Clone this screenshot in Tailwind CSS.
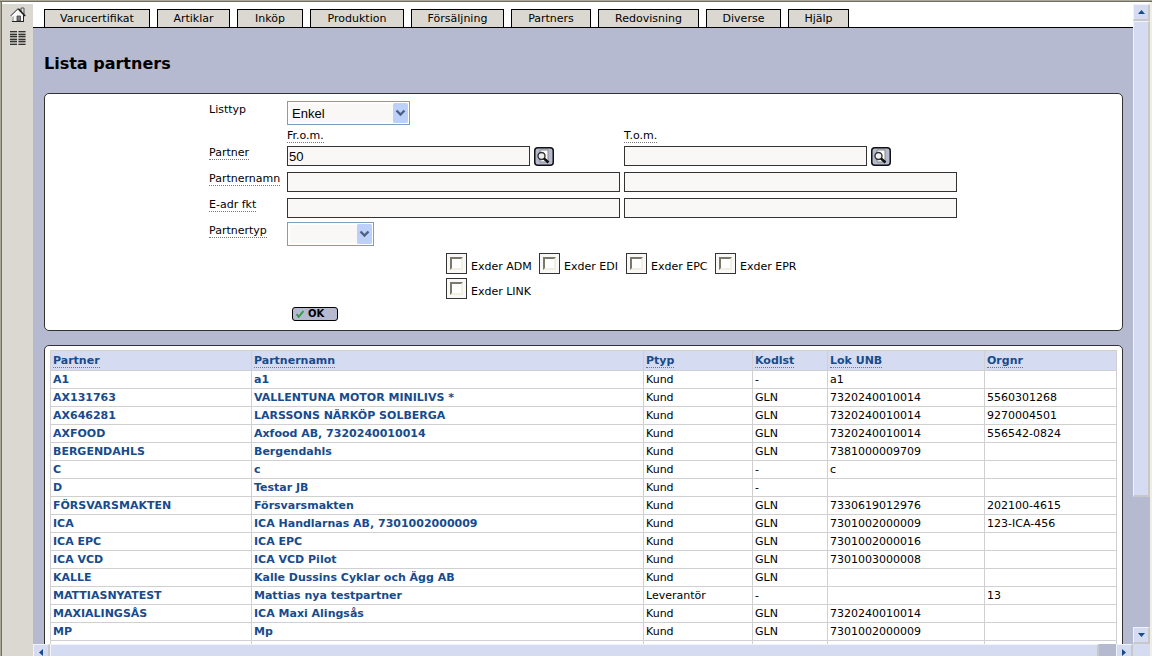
<!DOCTYPE html>
<html lang="sv">
<head>
<meta charset="utf-8">
<title>Lista partners</title>
<script src="https://cdn.jsdelivr.net/npm/@tailwindcss/browser@4"></script>
</head>
<body class="h-screen overflow-hidden flex flex-col bg-white text-black text-[11px] leading-[13px] font-['Verdana','DejaVu_Sans',sans-serif]">
<div class="h-[2px] shrink-0 bg-[#aca899] border-b border-[#716f64]"></div>
<div class="flex-1 min-h-0 flex border-l border-[#aca899]">
  <aside class="w-8 shrink-0 border-l border-[#716f64] pt-[2px] flex">
    <div class="flex-1 bg-[#dbd8d1] flex flex-col items-center pt-[3px] gap-[8px]">
      <a href="#" aria-label="Hem"><svg width="16" height="16" viewBox="0 0 16 16" class="block">
        <path d="M11 1h3v6h-3z" fill="#ddd" stroke="#555" stroke-width="1"/>
        <path d="M2.500 8v6h11V8L8 2.500z" fill="#f6f6f6"/>
        <path d="M3 8.500V14" stroke="#888"/>
        <path d="M0.700 9L8 1.800L10.500 4" fill="none" stroke="#666" stroke-width="1.200"/>
        <path d="M2 9.500L8.500 3.500" stroke="#fff" stroke-width="1.600"/>
        <path d="M8.500 2L15.200 9" stroke="#222" stroke-width="1.800"/>
        <path d="M7 14V9h3.500v5z" fill="#777" stroke="#444" stroke-width=".8"/>
        <path d="M2 14.500h12M13.500 8v6.500" fill="none" stroke="#222"/>
      </svg></a>
      <a href="#" aria-label="Meny"><svg width="16" height="14" viewBox="0 0 16 14" class="block">
        <path d="M0 0h7v14H0zM8.500 0H15.500v14H8.500z" fill="#a3a19c"/>
        <path d="M0 .5h7M8.500 .5h7M0 3.500h7M8.500 3.500h7M0 5.500h7M8.500 5.500h7M0 8.500h7M8.500 8.500h7M0 10.500h7M8.500 10.500h7M0 13.500h7M8.500 13.500h7" stroke="#333"/>
      </svg></a>
    </div>
  </aside>

  <div class="flex-1 min-w-0 flex flex-col">
    <div class="flex-1 min-h-0 flex">
      <main class="flex-1 min-w-0 overflow-hidden bg-[#b5bad0]">
        <nav class="flex gap-[7px] bg-white border-b border-black pt-[7px] pl-[11px] leading-[17px]">
          <a href="#" class="w-[106px] border border-b-0 border-black bg-[#dbd8d1] text-center">Varucertifikat</a>
          <a href="#" class="w-[73px] border border-b-0 border-black bg-[#dbd8d1] text-center">Artiklar</a>
          <a href="#" class="w-[66px] border border-b-0 border-black bg-[#dbd8d1] text-center">Inköp</a>
          <a href="#" class="w-[94px] border border-b-0 border-black bg-[#dbd8d1] text-center">Produktion</a>
          <a href="#" class="w-[93px] border border-b-0 border-black bg-[#dbd8d1] text-center">Försäljning</a>
          <a href="#" class="w-[80px] border border-b-0 border-black bg-[#dbd8d1] text-center">Partners</a>
          <a href="#" class="w-[101px] border border-b-0 border-black bg-[#dbd8d1] text-center">Redovisning</a>
          <a href="#" class="w-[75px] border border-b-0 border-black bg-[#dbd8d1] text-center">Diverse</a>
          <a href="#" class="w-[61px] border border-b-0 border-black bg-[#dbd8d1] text-center">Hjälp</a>
        </nav>
        <div class="pl-[11px] pr-[10px]">
          <h1 class="pt-[26px] pb-[19px] text-base leading-5 font-bold">Lista partners</h1>

          <form class="bg-white border border-[#333] rounded-[5px] pl-[164px] pt-[6px] pb-[9px]" onsubmit="return false">
            <div class="grid grid-cols-[74px_333px_333px] gap-x-1 auto-rows-[26px] items-center">
              <label for="listtyp" class="self-start mt-[3px]">Listtyp</label>
              <div class="relative w-[123px] col-span-2">
                <select id="listtyp" class="appearance-none block w-full h-6 border border-[#7f9db9] bg-[#f9f8f6] pl-1 text-[13px] font-['Liberation_Sans',sans-serif] shadow-[inset_0_0_0_2px_#fff]"><option>Enkel</option></select>
                <svg class="absolute right-[2px] top-[2px] pointer-events-none" width="15" height="20" viewBox="0 0 15 20"><rect width="15" height="20" rx="1.500" fill="#bdd0fa"/><path d="M3.500 7.500l4 4 4-4" fill="none" stroke="#4d6185" stroke-width="2.400"/></svg>
              </div>
            </div>
            <div class="grid grid-cols-[333px_333px] gap-x-1 pl-[78px] pt-[3px]">
              <div><span class="inline-block border-b border-dotted border-[#777]">Fr.o.m.</span></div>
              <div><span class="inline-block border-b border-dotted border-[#777]">T.o.m.</span></div>
            </div>
            <div class="grid grid-cols-[74px_333px_333px] gap-x-1 auto-rows-[26px] items-center">
              <label for="p1" class="self-start justify-self-start mt-[3px] border-b border-dotted border-[#777]">Partner</label>
              <div class="flex gap-1">
                <input id="p1" value="50" class="w-[243px] h-5 border border-[#333] bg-[#f9f8f6] px-px text-[13px] font-['Liberation_Sans',sans-serif]">
                <button type="button" aria-label="Sök från"><svg width="20" height="19" viewBox="0 0 20 19" class="block"><rect x=".75" y=".75" width="18.500" height="17.500" rx="3" fill="#b5bad0" stroke="#111" stroke-width="1.500"/><path d="M6 3h8v12H6z" fill="#fff" stroke="#888"/><circle cx="7.500" cy="9" r="3.500" fill="#eee" stroke="#333" stroke-width="1.400"/><path d="M10 11.500l4.500 4" stroke="#111" stroke-width="2.400"/></svg></button>
              </div>
              <div class="flex gap-1">
                <input aria-label="Partner t.o.m." class="w-[243px] h-5 border border-[#333] bg-[#f9f8f6] px-px text-[13px] font-['Liberation_Sans',sans-serif]">
                <button type="button" aria-label="Sök till"><svg width="20" height="19" viewBox="0 0 20 19" class="block"><rect x=".75" y=".75" width="18.500" height="17.500" rx="3" fill="#b5bad0" stroke="#111" stroke-width="1.500"/><path d="M6 3h8v12H6z" fill="#fff" stroke="#888"/><circle cx="7.500" cy="9" r="3.500" fill="#eee" stroke="#333" stroke-width="1.400"/><path d="M10 11.500l4.500 4" stroke="#111" stroke-width="2.400"/></svg></button>
              </div>
              <label for="n1" class="self-start justify-self-start mt-[3px] border-b border-dotted border-[#777]">Partnernamn</label>
              <input id="n1" class="w-full h-5 border border-[#333] bg-[#f9f8f6] px-px text-[13px] font-['Liberation_Sans',sans-serif]">
              <input aria-label="Partnernamn t.o.m." class="w-full h-5 border border-[#333] bg-[#f9f8f6] px-px text-[13px] font-['Liberation_Sans',sans-serif]">
              <label for="e1" class="self-start justify-self-start mt-[3px] border-b border-dotted border-[#777]">E-adr fkt</label>
              <input id="e1" class="w-full h-5 border border-[#333] bg-[#f9f8f6] px-px text-[13px] font-['Liberation_Sans',sans-serif]">
              <input aria-label="E-adr fkt t.o.m." class="w-full h-5 border border-[#333] bg-[#f9f8f6] px-px text-[13px] font-['Liberation_Sans',sans-serif]">
              <label for="ptyp" class="self-start justify-self-start mt-[3px] border-b border-dotted border-[#777]">Partnertyp</label>
              <div class="relative w-[87px]">
                <select id="ptyp" class="appearance-none block w-full h-6 border border-[#7f9db9] bg-[#f9f8f6] pl-1 text-[13px] font-['Liberation_Sans',sans-serif] shadow-[inset_0_0_0_2px_#fff]"><option></option></select>
                <svg class="absolute right-[2px] top-[2px] pointer-events-none" width="15" height="20" viewBox="0 0 15 20"><rect width="15" height="20" rx="1.500" fill="#bdd0fa"/><path d="M3.500 7.500l4 4 4-4" fill="none" stroke="#4d6185" stroke-width="2.400"/></svg>
              </div>
            </div>
            <div class="pl-[237px] pt-[6px] grid grid-cols-[93px_87px_89px_auto] gap-y-1">
                <label class="flex items-end gap-1"><input type="checkbox" class="appearance-none size-[21px] p-[3px] border border-[#333] bg-[#f9f8f6] before:block before:size-[13px] before:bg-white before:border-2 before:border-t-[#7b796c] before:border-l-[#7b796c] before:border-b-[#f1efe2] before:border-r-[#f1efe2] checked:before:bg-[#7b796c]"><span class="pb-px">Exder ADM</span></label>
                <label class="flex items-end gap-1"><input type="checkbox" class="appearance-none size-[21px] p-[3px] border border-[#333] bg-[#f9f8f6] before:block before:size-[13px] before:bg-white before:border-2 before:border-t-[#7b796c] before:border-l-[#7b796c] before:border-b-[#f1efe2] before:border-r-[#f1efe2] checked:before:bg-[#7b796c]"><span class="pb-px">Exder EDI</span></label>
                <label class="flex items-end gap-1"><input type="checkbox" class="appearance-none size-[21px] p-[3px] border border-[#333] bg-[#f9f8f6] before:block before:size-[13px] before:bg-white before:border-2 before:border-t-[#7b796c] before:border-l-[#7b796c] before:border-b-[#f1efe2] before:border-r-[#f1efe2] checked:before:bg-[#7b796c]"><span class="pb-px">Exder EPC</span></label>
                <label class="flex items-end gap-1"><input type="checkbox" class="appearance-none size-[21px] p-[3px] border border-[#333] bg-[#f9f8f6] before:block before:size-[13px] before:bg-white before:border-2 before:border-t-[#7b796c] before:border-l-[#7b796c] before:border-b-[#f1efe2] before:border-r-[#f1efe2] checked:before:bg-[#7b796c]"><span class="pb-px">Exder EPR</span></label>
                <label class="flex items-end gap-1"><input type="checkbox" class="appearance-none size-[21px] p-[3px] border border-[#333] bg-[#f9f8f6] before:block before:size-[13px] before:bg-white before:border-2 before:border-t-[#7b796c] before:border-l-[#7b796c] before:border-b-[#f1efe2] before:border-r-[#f1efe2] checked:before:bg-[#7b796c]"><span class="pb-px">Exder LINK</span></label>
            </div>
            <button type="submit" class="ml-[83px] mt-2 flex items-center gap-1 w-[46px] h-[14px] pl-[3px] rounded-[3px] border border-black bg-[#b5bad0] text-[10px] leading-3 font-bold"><svg width="8" height="8" viewBox="0 0 8 8"><path d="M.5 4l2.200 2.800L7.500 1" fill="none" stroke="#2a9a3c" stroke-width="1.800"/></svg>OK</button>
          </form>

          <section class="mt-[14px] bg-white border border-[#333] rounded-[5px] px-[5px] pt-1 pb-3">
            <table class="w-full table-fixed border-collapse [&_td]:border [&_td]:border-[#d0d0d0] [&_td]:h-[18px] [&_td]:px-[2px] [&_th]:border [&_th]:border-[#d0d0d0] [&_th]:h-5 [&_th]:px-[2px] [&_th]:text-left [&_th]:bg-[#d5dbf0] [&_th]:text-[#174b8c] [&_a]:font-bold [&_a]:text-[#174b8c]">
              <colgroup><col class="w-[201px]"><col><col class="w-[109px]"><col class="w-[75px]"><col class="w-[157px]"><col class="w-[132px]"></colgroup>
              <thead><tr>
                <th><span class="border-b border-dotted border-[#777]">Partner</span></th><th><span class="border-b border-dotted border-[#777]">Partnernamn</span></th><th><span class="border-b border-dotted border-[#777]">Ptyp</span></th><th><span class="border-b border-dotted border-[#777]">Kodlst</span></th><th><span class="border-b border-dotted border-[#777]">Lok UNB</span></th><th><span class="border-b border-dotted border-[#777]">Orgnr</span></th>
              </tr></thead>
              <tbody>
                <tr><td><a href="#">A1</a></td><td><a href="#">a1</a></td><td>Kund</td><td>-</td><td>a1</td><td></td></tr>
                <tr><td><a href="#">AX131763</a></td><td><a href="#">VALLENTUNA MOTOR MINILIVS *</a></td><td>Kund</td><td>GLN</td><td>7320240010014</td><td>5560301268</td></tr>
                <tr><td><a href="#">AX646281</a></td><td><a href="#">LARSSONS NÄRKÖP SOLBERGA</a></td><td>Kund</td><td>GLN</td><td>7320240010014</td><td>9270004501</td></tr>
                <tr><td><a href="#">AXFOOD</a></td><td><a href="#">Axfood AB, 7320240010014</a></td><td>Kund</td><td>GLN</td><td>7320240010014</td><td>556542-0824</td></tr>
                <tr><td><a href="#">BERGENDAHLS</a></td><td><a href="#">Bergendahls</a></td><td>Kund</td><td>GLN</td><td>7381000009709</td><td></td></tr>
                <tr><td><a href="#">C</a></td><td><a href="#">c</a></td><td>Kund</td><td>-</td><td>c</td><td></td></tr>
                <tr><td><a href="#">D</a></td><td><a href="#">Testar JB</a></td><td>Kund</td><td>-</td><td></td><td></td></tr>
                <tr><td><a href="#">FÖRSVARSMAKTEN</a></td><td><a href="#">Försvarsmakten</a></td><td>Kund</td><td>GLN</td><td>7330619012976</td><td>202100-4615</td></tr>
                <tr><td><a href="#">ICA</a></td><td><a href="#">ICA Handlarnas AB, 7301002000009</a></td><td>Kund</td><td>GLN</td><td>7301002000009</td><td>123-ICA-456</td></tr>
                <tr><td><a href="#">ICA EPC</a></td><td><a href="#">ICA EPC</a></td><td>Kund</td><td>GLN</td><td>7301002000016</td><td></td></tr>
                <tr><td><a href="#">ICA VCD</a></td><td><a href="#">ICA VCD Pilot</a></td><td>Kund</td><td>GLN</td><td>7301003000008</td><td></td></tr>
                <tr><td><a href="#">KALLE</a></td><td><a href="#">Kalle Dussins Cyklar och Ägg AB</a></td><td>Kund</td><td>GLN</td><td></td><td></td></tr>
                <tr><td><a href="#">MATTIASNYATEST</a></td><td><a href="#">Mattias nya testpartner</a></td><td>Leverantör</td><td>-</td><td></td><td>13</td></tr>
                <tr><td><a href="#">MAXIALINGSÅS</a></td><td><a href="#">ICA Maxi Alingsås</a></td><td>Kund</td><td>GLN</td><td>7320240010014</td><td></td></tr>
                <tr><td><a href="#">MP</a></td><td><a href="#">Mp</a></td><td>Kund</td><td>GLN</td><td>7301002000009</td><td></td></tr>
                <tr><td></td><td></td><td></td><td></td><td></td><td></td></tr>
              </tbody>
            </table>
          </section>
        </div>
      </main>
      <div class="w-[17px] shrink-0 mt-[2px] bg-[#b5bad0] flex flex-col">
        <button type="button" aria-label="Upp" class="h-[17px] shrink-0 flex items-center justify-center bg-[#d5dbf0] border border-t-[#f0f3fc] border-l-[#f0f3fc] border-b-2 border-r-2 border-b-[#c6c8ca] border-r-[#c6c8ca]"><svg width="7" height="4" viewBox="0 0 7 4"><path d="M0 4L3.500 0L7 4z" fill="#174b8c"/></svg></button>
        <div class="basis-[476px] shrink-0 bg-[#d5dbf0] border border-t-[#f0f3fc] border-l-[#f0f3fc] border-b-2 border-r-2 border-b-[#c6c8ca] border-r-[#c6c8ca]"></div>
        <button type="button" aria-label="Ned" class="mt-auto h-[17px] shrink-0 flex items-center justify-center bg-[#d5dbf0] border border-t-[#f0f3fc] border-l-[#f0f3fc] border-b-2 border-r-2 border-b-[#c6c8ca] border-r-[#c6c8ca]"><svg width="7" height="4" viewBox="0 0 7 4"><path d="M0 0h7L3.500 4z" fill="#174b8c"/></svg></button>
      </div>
    </div>
    <div class="h-3 shrink-0 overflow-hidden flex bg-[#b5bad0]">
      <button type="button" aria-label="Vänster" class="w-[17px] h-[17px] shrink-0 flex items-center justify-center bg-[#d5dbf0] border border-t-[#f0f3fc] border-l-[#f0f3fc] border-b-2 border-r-2 border-b-[#c6c8ca] border-r-[#c6c8ca]"><svg width="4" height="7" viewBox="0 0 4 7"><path d="M4 0v7L0 3.500z" fill="#174b8c"/></svg></button>
      <div class="flex-1 h-[17px] mr-[17px] bg-[#d5dbf0] border border-t-[#f0f3fc] border-l-[#f0f3fc] border-b-2 border-r-2 border-b-[#c6c8ca] border-r-[#c6c8ca]"></div>
      <button type="button" aria-label="Höger" class="w-[17px] h-[17px] shrink-0 flex items-center justify-center bg-[#d5dbf0] border border-t-[#f0f3fc] border-l-[#f0f3fc] border-b-2 border-r-2 border-b-[#c6c8ca] border-r-[#c6c8ca]"><svg width="4" height="7" viewBox="0 0 4 7"><path d="M0 0v7L4 3.500z" fill="#174b8c"/></svg></button>
      <div class="w-[17px] shrink-0 bg-[#d5dbf0]"></div>
    </div>
  </div>
  <div class="w-[2px] shrink-0 bg-[#f1efe2]"></div>
</div>
</body>
</html>
